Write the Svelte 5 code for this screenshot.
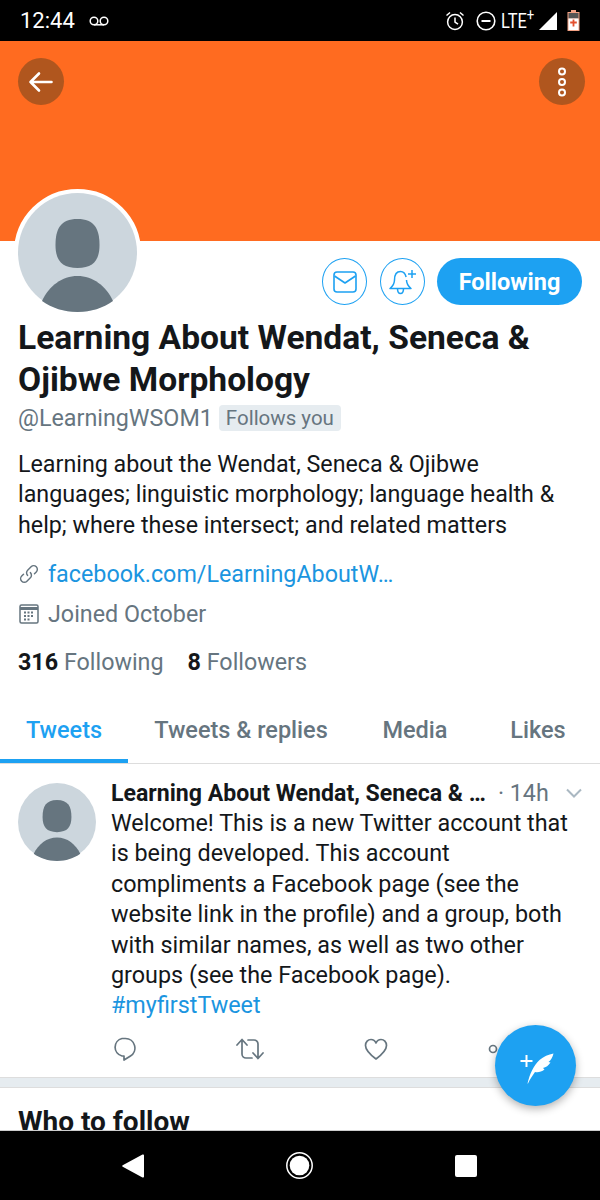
<script>
	const tabs = [
		{ label: 'Tweets', width: 128, active: true },
		{ label: 'Tweets & replies', width: 226 },
		{ label: 'Media', width: 122 },
		{ label: 'Likes', width: 124 }
	];
	const bio = [
		'Learning about the Wendat, Seneca & Ojibwe',
		'languages; linguistic morphology; language health &',
		'help; where these intersect; and related matters'
	];
	const tweetLines = [
		'Welcome! This is a new Twitter account that',
		'is being developed. This account',
		'compliments a Facebook page (see the',
		'website link in the profile) and a group, both',
		'with similar names, as well as two other',
		'groups (see the Facebook page).'
	];
</script>

<div class="phone">
	<div class="status">
		<span class="time">12:44</span>
		<svg class="voicemail" width="20" height="10" viewBox="0 0 20 10" fill="none" stroke="#fff" stroke-width="1.5">
			<circle cx="5" cy="5" r="3.800" />
			<circle cx="15" cy="5" r="3.800" />
			<path d="M5 8.800h10" />
		</svg>
		<span class="spacer"></span>
		<svg width="20" height="22" viewBox="0 0 20 22" fill="none" stroke="#fff" stroke-width="1.500">
			<circle cx="10" cy="12" r="7.400" />
			<path d="M10 7.500V12l3 2.200M1.500 5.500l3.500-3M18.500 5.500l-3.500-3" />
		</svg>
		<svg class="dnd" width="20" height="20" viewBox="0 0 20 20" fill="none" stroke="#fff" stroke-width="1.600">
			<circle cx="10" cy="10" r="8.800" />
			<path d="M5.500 10h9" stroke-width="2" />
		</svg>
		<span class="lte">LTE<sup>+</sup></span>
		<svg class="signal" width="18" height="18" viewBox="0 0 18 18"><path d="M0 18L18 0v18z" fill="#fff" /></svg>
		<svg class="battery" width="13" height="21" viewBox="0 0 13 21">
			<path d="M4 0h5v2h3.500v19H.5V2H4z" fill="#f2a184" />
			<path d="M1.500 3h10v5.500h-10z" fill="#555" />
			<path d="M1.500 8.500h10v11.500h-10z" fill="#fff" />
			<path d="M6.500 9.500v7M3.200 12.500h6.600" stroke="#e4502f" stroke-width="1.800" />
		</svg>
	</div>

	<div class="content">
		<div class="banner">
			<button class="round" aria-label="Back">
				<svg width="26" height="24" viewBox="0 0 26 24" fill="none" stroke="#fff" stroke-width="2.600" stroke-linecap="round" stroke-linejoin="round">
					<path d="M2.500 12h21M11 3.500L2.500 12l8.500 8.500" />
				</svg>
			</button>
			<button class="round" aria-label="More">
				<svg width="12" height="34" viewBox="0 0 12 34" fill="none" stroke="#fff" stroke-width="2">
					<circle cx="6" cy="6.500" r="3" />
					<circle cx="6" cy="17" r="3" />
					<circle cx="6" cy="27.500" r="3" />
				</svg>
			</button>
		</div>

		<div class="profile">
			<div class="top-row">
				<div class="avatar-ring">
					<svg class="avatar" viewBox="0 0 119 119">
						<circle cx="59.500" cy="59.500" r="59.500" fill="#ccd6dd" />
						<path d="M59.500 26c-17 0-22 10-22 26 0 15 6 23 22 23s22-8 22-23c0-16-5-26-22-26z" fill="#66757f" />
						<path d="M24 108c7-15 20-25 35.500-25S88 93 95 108c-10 7-22 11-35.500 11S34 115 24 108z" fill="#66757f" />
					</svg>
				</div>
				<div class="actions">
					<button class="outline" aria-label="Message">
						<svg width="24" height="22" viewBox="0 0 24 22" fill="none" stroke="#1da1f2" stroke-width="1.600" stroke-linejoin="round">
							<rect x="1" y="1" width="22" height="20" rx="3" />
							<path d="M1.500 5l10.500 7 10.500-7" />
						</svg>
					</button>
					<button class="outline" aria-label="Notifications">
						<svg width="28" height="26" viewBox="0 0 28 26" fill="none" stroke="#1da1f2" stroke-width="1.500" stroke-linejoin="round">
							<path d="M17.100 8c-.8-3.500-2.600-5.500-5.600-5.500C7 2.500 5.500 7 5.500 11c0 4-1.500 6-4.500 8.500h21C19 17 17.500 15 17.500 11" />
							<path d="M8.500 19.500c0 3 1 5 3 5s3-2 3-5" />
							<path d="M23 1v8M19 5h8" />
						</svg>
					</button>
					<button class="following">Following</button>
				</div>
			</div>

			<h1>Learning About Wendat, Seneca &amp; Ojibwe Morphology</h1>
			<div class="handle-row">
				<span class="handle">@LearningWSOM1</span>
				<span class="follows">Follows you</span>
			</div>
			<div class="bio">
				{#each bio as line}
					<div>{line}</div>
				{/each}
			</div>

			<div class="meta link">
				<svg width="20" height="20" viewBox="0 0 22 22" fill="none" stroke="#66757f" stroke-width="1.600" stroke-linecap="round">
					<path d="M9.500 12.500a4 4 0 0 1 0-5.700l3.800-3.800a4 4 0 0 1 5.700 5.700l-2 2" />
					<path d="M12.500 9.500a4 4 0 0 1 0 5.700l-3.800 3.800a4 4 0 0 1-5.700-5.700l2-2" />
				</svg>
				<span>facebook.com/LearningAboutW…</span>
			</div>
			<div class="meta joined">
				<svg width="20" height="20" viewBox="0 0 20 20" fill="none" stroke="#66757f">
					<rect x="1" y="1" width="18" height="18" rx="1.500" stroke-width="1.500" />
					<path d="M1 4.500h18" stroke-width="3" />
					<path d="M5 8.500h2m1.500 0h2m1.500 0h2M5 12h2m1.500 0h2m1.500 0h2M5 15.500h2m1.500 0h2" stroke-width="2" />
				</svg>
				<span>Joined October</span>
			</div>
			<div class="counts">
				<span><b>316</b> Following</span>
				<span><b>8</b> Followers</span>
			</div>
		</div>

		<div class="tabs">
			{#each tabs as tab}
				<div class="tab" class:active={tab.active} style="width: {tab.width}px;">{tab.label}</div>
			{/each}
		</div>

		<div class="tweet">
			<svg class="tweet-avatar" viewBox="0 0 119 119">
				<circle cx="59.500" cy="59.500" r="59.500" fill="#ccd6dd" />
				<path d="M59.500 26c-17 0-22 10-22 26 0 15 6 23 22 23s22-8 22-23c0-16-5-26-22-26z" fill="#66757f" />
				<path d="M24 108c7-15 20-25 35.500-25S88 93 95 108c-10 7-22 11-35.500 11S34 115 24 108z" fill="#66757f" />
			</svg>
			<div class="tweet-main">
				<div class="tweet-head">
					<span class="name">Learning About Wendat, Seneca &amp; …</span>
					<span class="when">· 14h</span>
					<svg width="16" height="10" viewBox="0 0 16 10" fill="none" stroke="#aab8c2" stroke-width="2"><path d="M1 1.500l7 7 7-7" /></svg>
				</div>
				<div class="tweet-text">
					{#each tweetLines as line}
						<div>{line}</div>
					{/each}
					<div class="hashtag">#myfirstTweet</div>
				</div>
				<div class="tweet-actions">
					<svg width="24" height="24" viewBox="0 0 24 24" fill="none" stroke="#66757f" stroke-width="1.700" stroke-linejoin="round">
						<path d="M10 1.500h3.500a9.500 9.500 0 0 1 5 17.500l-6.500 4v-4h-2a9 9 0 0 1 0-17.500z" />
					</svg>
					<svg width="28" height="22" viewBox="0 0 28 22" fill="none" stroke="#66757f" stroke-width="1.700" stroke-linecap="round" stroke-linejoin="round">
						<path d="M1 7l5-5.500L11 7M6 2v14a4 4 0 0 0 4 4h6" />
						<path d="M27 15l-5 5.500L17 15M22 20V6a4 4 0 0 0-4-4h-6" />
					</svg>
					<svg width="24" height="22" viewBox="0 0 24 22" fill="none" stroke="#66757f" stroke-width="1.700" stroke-linejoin="round">
						<path d="M12 21C6 16.500 1.500 12.500 1.500 7.500 1.500 4 4 1.500 7 1.500c2.200 0 4 1.200 5 3.500 1-2.300 2.800-3.500 5-3.500 3 0 5.500 2.500 5.500 6 0 5-4.500 9-10.500 13.500z" />
					</svg>
					<svg width="24" height="24" viewBox="0 0 24 24" fill="none" stroke="#66757f" stroke-width="1.700">
						<circle cx="5" cy="12" r="3.500" />
					</svg>
				</div>
			</div>
		</div>

		<div class="separator"></div>
		<h2>Who to follow</h2>

		<button class="fab" aria-label="New tweet">
			<svg width="50" height="50" viewBox="0 0 50 50" fill="#fff">
				<path d="M9.500 19h12v2h-12zM14.500 14h2v12h-2z" />
				<path d="M16.500 42.500c2-9 6-18 12-23.500 4-3.500 9-5.500 14-6.500-1 4-2.500 6.500-5 8.500l2 .5c-2 3-4.500 5-7.500 5.500l1.500 1.500c-3 2.500-6.500 3-9.500 2.500-2.500 3.500-5 7-7 11.500z" />
			</svg>
		</button>
	</div>

	<div class="navbar">
		<svg width="22" height="24" viewBox="0 0 22 24"><path d="M21 .5c.6 0 1 .4 1 1v21c0 .8-.8 1.300-1.500.9L.7 12.800c-.6-.3-.6-1.200 0-1.500L20.500.6z" fill="#fff" /></svg>
		<svg width="27" height="27" viewBox="0 0 27 27" fill="none" stroke="#fff">
			<circle cx="13.500" cy="13.500" r="12.700" stroke-width="1.500" />
			<circle cx="13.500" cy="13.500" r="9.800" fill="#fff" stroke="none" />
		</svg>
		<div class="square"></div>
	</div>
</div>

<style>
	:global(body) {
		margin: 0;
		background: #fff;
	}

	.phone {
		width: 600px;
		height: 1200px;
		display: flex;
		flex-direction: column;
		overflow: hidden;
		font-family: Roboto, "Liberation Sans", sans-serif;
		color: #14171a;
	}

	button {
		border: 0;
		padding: 0;
		font-family: inherit;
	}

	.status {
		height: 41px;
		flex: none;
		background: #000;
		color: #fff;
		display: flex;
		align-items: center;
		padding: 0 20px 0 20px;
		box-sizing: border-box;
	}

	.time {
		font-size: 22px;
		font-weight: 400;
		width: 52px;
	}

	.voicemail {
		margin-left: 17px;
	}

	.spacer {
		flex: 1;
	}

	.dnd {
		margin-left: 11px;
	}

	.lte {
		font-size: 20px;
		margin-left: 5px;
		width: 33px;
		transform: scaleX(0.82);
		transform-origin: left;
		white-space: nowrap;
	}

	.lte sup {
		font-size: 16px;
		line-height: 0;
	}

	.signal {
		margin-left: 5px;
	}

	.battery {
		margin-left: 10px;
	}

	.content {
		flex: 1;
		position: relative;
		overflow: hidden;
		min-height: 0;
	}

	.banner {
		height: 200px;
		background: #ff6b20;
		display: flex;
		justify-content: space-between;
		align-items: flex-start;
		padding: 17px 15px 0 18px;
		box-sizing: border-box;
	}

	.round {
		width: 46px;
		height: 47px;
		border-radius: 50%;
		background: #b0561e;
		display: flex;
		align-items: center;
		justify-content: center;
	}

	.profile {
		padding: 0 18px;
	}

	.top-row {
		display: flex;
		justify-content: space-between;
		align-items: flex-start;
		height: 76px;
	}

	.avatar-ring {
		margin: -52px 0 0 -4px;
		width: 119px;
		height: 119px;
		border: 4px solid #fff;
		border-radius: 50%;
		background: #fff;
	}

	.avatar {
		display: block;
		width: 119px;
		height: 119px;
	}

	.actions {
		display: flex;
		gap: 13px;
		margin: 17px 0 0 0;
		align-items: center;
	}

	.outline {
		width: 45px;
		height: 47px;
		border-radius: 50%;
		border: 1.500px solid #1da1f2;
		background: #fff;
		display: flex;
		align-items: center;
		justify-content: center;
		box-sizing: border-box;
	}

	.following {
		width: 145px;
		height: 47px;
		margin-left: -1px;
		border-radius: 24px;
		background: #1da1f2;
		color: #fff;
		font-size: 23.500px;
		font-weight: 700;
	}

	h1 {
		margin: 0;
		font-size: 33.600px;
		line-height: 42px;
		font-weight: 700;
		width: 540px;
	}

	.handle-row {
		display: flex;
		align-items: center;
		margin-top: 2px;
		height: 30px;
	}

	.handle {
		font-size: 23.300px;
		color: #66757f;
	}

	.follows {
		margin-left: 6px;
		padding: 0 7px;
		height: 26px;
		line-height: 27px;
		background: #e6ecf0;
		border-radius: 4px;
		color: #66757f;
		font-size: 20.500px;
	}

	.bio {
		margin-top: 16px;
		font-size: 23.270px;
		line-height: 30.300px;
	}

	.meta {
		display: flex;
		align-items: center;
		font-size: 23.300px;
		color: #66757f;
		height: 30px;
	}

	.meta svg {
		flex: none;
		margin-right: 9px;
		margin-left: 1px;
	}

	.link {
		margin-top: 19px;
	}

	.link span {
		color: #1b95e0;
	}

	.joined {
		margin-top: 10px;
	}

	.counts {
		display: flex;
		gap: 24px;
		margin-top: 18px;
		height: 30px;
		line-height: 30px;
		font-size: 23.300px;
		color: #66757f;
	}

	.counts b {
		color: #14171a;
		font-weight: 700;
	}

	.tabs {
		display: flex;
		margin-top: 22px;
		height: 65px;
		border-bottom: 1.500px solid #ddd;
		box-sizing: border-box;
	}

	.tab {
		flex: none;
		height: 64px;
		box-sizing: border-box;
		text-align: center;
		font-size: 23.500px;
		font-weight: 500;
		color: #66757f;
		line-height: 62px;
	}

	.tab.active {
		color: #1da1f2;
		border-bottom: 4px solid #1da1f2;
	}

	.tweet {
		display: flex;
		padding: 19px 18px 0 18px;
	}

	.tweet-avatar {
		flex: none;
		width: 78px;
		height: 78px;
	}

	.tweet-main {
		margin-left: 15px;
		flex: 1;
		min-width: 0;
	}

	.tweet-head {
		display: flex;
		align-items: center;
		height: 21px;
		white-space: nowrap;
	}

	.name {
		font-size: 23.100px;
		font-weight: 700;
	}

	.when {
		font-size: 23.300px;
		color: #66757f;
		margin-left: 12px;
	}

	.tweet-head svg {
		margin-left: 17px;
	}

	.tweet-text {
		margin-top: 4px;
		font-size: 23.350px;
		line-height: 30.400px;
		white-space: nowrap;
	}

	.hashtag {
		color: #1b95e0;
	}

	.tweet-actions {
		display: flex;
		align-items: center;
		margin-top: 16px;
		height: 24px;
		padding-left: 1px;
		gap: 100px;
	}

	.separator {
		height: 11px;
		margin-top: 16px;
		background: #e6ecf0;
		border-top: 1px solid #ddd;
		border-bottom: 1px solid #ddd;
		box-sizing: border-box;
	}

	h2 {
		margin: 18px 0 0 18px;
		font-size: 28px;
		line-height: 32px;
		font-weight: 700;
	}

	.fab {
		position: absolute;
		left: 495px;
		top: 984px;
		width: 81px;
		height: 81px;
		border-radius: 50%;
		background: #1da1f2;
		box-shadow: 0 3px 8px rgba(0, 0, 0, 0.3);
		display: flex;
		align-items: center;
		justify-content: center;
	}

	.navbar {
		height: 70px;
		flex: none;
		background: #000;
		display: flex;
		align-items: center;
		padding: 0 123px 0 122px;
		justify-content: space-between;
		box-sizing: border-box;
		border-top: 1px solid #ccc;
	}

	.square {
		width: 22px;
		height: 22px;
		background: #fff;
		border-radius: 2px;
	}
</style>
